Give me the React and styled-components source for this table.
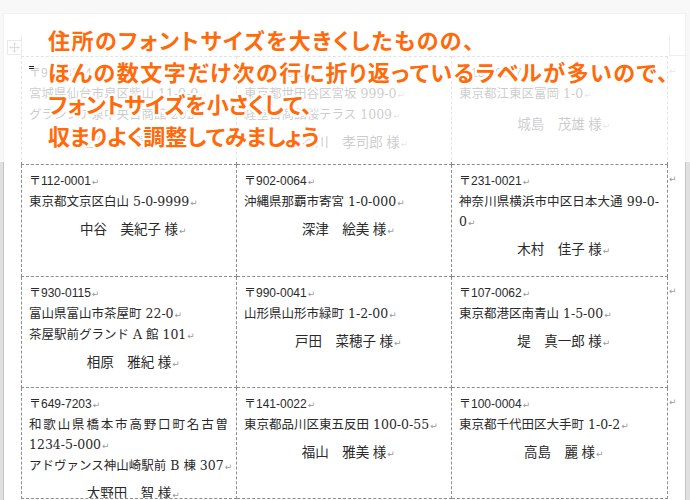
import React from 'react';
import styled, { createGlobalStyle } from 'styled-components';
import { Move } from 'lucide-react';

const GlobalStyle = createGlobalStyle`
  body {
    margin: 0;
    background: #e0e0e0;
    font-family: "Liberation Serif", "Noto Sans CJK JP", serif;
  }
`;

const Screen = styled.div`
  position: relative;
  width: 690px;
  height: 500px;
  overflow: hidden;
`;

const Page = styled.div`
  position: relative;
  box-sizing: border-box;
  width: 683px;
  height: 500px;
  margin: 13px 0 0 3px;
  padding: 42px 0 0 17px;
  background: #fff;
  border: 1px solid #c4c4c4;
  border-bottom: none;
`;

const CornerLeft = styled.div`
  position: absolute;
  left: 17px;
  top: 21px;
  width: 1px;
  height: 21px;
  background: #b8b8b8;
`;

const CornerRight = styled.div`
  position: absolute;
  left: 665px;
  top: 21px;
  width: 17px;
  height: 20px;
  border-left: 1px solid #b8b8b8;
  border-bottom: 1px solid #b8b8b8;
`;

const MoveHandle = styled.div`
  position: absolute;
  left: 3px;
  top: 26px;
  width: 13px;
  height: 13px;
  border: 1px solid #a8a8a8;
  background: #fff;
  display: flex;
  align-items: center;
  justify-content: center;
  color: #444;
`;

const Table = styled.div`
  display: flex;
  flex-direction: column;
`;

const Row = styled.div`
  display: grid;
  grid-template-columns: 216px 215px 216px 20px;
  height: ${p => p.$h}px;
`;

const Cell = styled.div`
  box-sizing: border-box;
  padding: 6px 0 0 7px;
  border-right: 1px dashed #8c8c8c;
  border-bottom: 1px dashed #8c8c8c;
  border-left: ${p => (p.$first ? '1px dashed #8c8c8c' : 'none')};
  border-top: ${p => (p.$top ? '1px dashed #8c8c8c' : 'none')};
  color: #2a2a2a;
  overflow: hidden;
`;

const RowEnd = styled.div`
  padding: ${p => (p.$top ? 9 : 8)}px 0 0 1px;
  font-family: "DejaVu Sans", sans-serif;
  font-size: 9px;
  color: #9a9a9a;
  line-height: 12px;
`;

const Postal = styled.div`
  font-family: "Liberation Sans", "Noto Sans CJK JP", sans-serif;
  font-size: 12px;
  line-height: 20px;
`;

const Address = styled.div`
  font-family: "DejaVu Serif", "Noto Sans CJK JP", serif;
  font-size: 12.5px;
  line-height: 20px;
  white-space: nowrap;
  padding-right: 8px;
  text-align: ${p => (p.$spread ? 'justify' : 'left')};
  text-align-last: ${p => (p.$spread ? 'justify' : 'auto')};
`;

const Name = styled.div`
  margin-top: 6px;
  font-size: 13.5px;
  line-height: 21px;
  text-align: center;
  white-space: nowrap;
  padding-right: 7px;
`;

const Mark = styled.span`
  display: inline-block;
  width: 11px;
  margin-right: -11px;
  font-family: "DejaVu Sans", sans-serif;
  font-size: 9px;
  color: #9a9a9a;
  text-align: left;
  text-indent: 1px;
`;

const Overlay = styled.div`
  position: absolute;
  left: 0;
  top: 0;
  right: 0;
  height: 162px;
  background: rgba(255, 255, 255, 0.76);
  box-sizing: border-box;
  padding: 23px 0 0 48px;
`;

const Caret = styled.div`
  position: absolute;
  left: 29px;
  top: 66px;
  width: 5px;
  height: 3px;
  border-top: 1px solid #222;
  border-bottom: 1px solid #222;
  box-sizing: border-box;
`;

const Callout = styled.div`
  font-family: "Noto Sans CJK JP", sans-serif;
  font-weight: 700;
  font-size: 22px;
  line-height: 32px;
  color: #ff6a0a;
  white-space: nowrap;
  letter-spacing: ${p => p.$ls || 0}px;
  font-feature-settings: "palt";
  text-shadow:
    2px 0 0 #fff, -2px 0 0 #fff, 0 2px 0 #fff, 0 -2px 0 #fff,
    2px 2px 0 #fff, -2px -2px 0 #fff, 2px -2px 0 #fff, -2px 2px 0 #fff,
    0 0 3px #fff;
`;

const rows = [
  {
    h: 108,
    cells: [
      { postal: '〒981-3204', lines: ['宮城県仙台市泉区紫山 11-0-0', 'グランシア泉中央日商館 202'], name: '佐々木　健一 様' },
      { postal: '〒156-0051', lines: ['東京都世田谷区宮坂 999-0', '経堂日商館桜テラス 1009'], name: '長谷川　孝司郎 様' },
      { postal: '〒135-0047', lines: ['東京都江東区富岡 1-0'], name: '城島　茂雄 様', gap: 9 },
    ],
  },
  {
    h: 112,
    cells: [
      { postal: '〒112-0001', lines: ['東京都文京区白山 5-0-9999'], name: '中谷　美紀子 様' },
      { postal: '〒902-0064', lines: ['沖縄県那覇市寄宮 1-0-000'], name: '深津　絵美 様' },
      { postal: '〒231-0021', lines: [{ text: '神奈川県横浜市中区日本大通 99-0-', spread: true, nomark: true }, '0'], name: '木村　佳子 様' },
    ],
  },
  {
    h: 111,
    cells: [
      { postal: '〒930-0115', lines: ['富山県富山市茶屋町 22-0', '茶屋駅前グランド A 館 101'], name: '相原　雅紀 様' },
      { postal: '〒990-0041', lines: ['山形県山形市緑町 1-2-00'], name: '戸田　菜穂子 様' },
      { postal: '〒107-0062', lines: ['東京都港区南青山 1-5-00'], name: '堤　真一郎 様' },
    ],
  },
  {
    h: 111,
    cells: [
      { postal: '〒649-7203', lines: [{ text: '和歌山県橋本市高野口町名古曽', spread: true, nomark: true }, '1234-5-000', 'アドヴァンス神山崎駅前 B 棟 307'], name: '大野田　智 様' },
      { postal: '〒141-0022', lines: ['東京都品川区東五反田 100-0-55'], name: '福山　雅美 様' },
      { postal: '〒100-0004', lines: ['東京都千代田区大手町 1-0-2'], name: '高島　麗 様' },
    ],
  },
];

const Label = ({ data, first, top }) => (
  <Cell $first={first} $top={top}>
    <Postal>{data.postal}<Mark>↵</Mark></Postal>
    {data.lines.map((line, i) => {
      const item = typeof line === 'string' ? { text: line } : line;
      return (
        <Address key={i} $spread={item.spread}>
          {item.text}
          {!item.nomark && <Mark>↵</Mark>}
        </Address>
      );
    })}
    <Name style={data.gap ? { marginTop: data.gap } : undefined}>
      {data.name}<Mark>↵</Mark>
    </Name>
  </Cell>
);

const App = () => {
  return (
    <>
      <GlobalStyle />
      <Screen>
        <Page>
          <CornerLeft />
          <CornerRight />
          <MoveHandle><Move size={11} strokeWidth={1.6} /></MoveHandle>
          <Table>
            {rows.map((row, r) => (
              <Row key={r} $h={r === 0 ? row.h + 1 : row.h}>
                {row.cells.map((c, i) => (
                  <Label key={i} data={c} first={i === 0} top={r === 0} />
                ))}
                <RowEnd $top={r === 0}>↵</RowEnd>
              </Row>
            ))}
          </Table>
        </Page>
        <Overlay>
          <Caret />
          <Callout $ls={1.5}>住所のフォントサイズを大きくしたものの、</Callout>
          <Callout $ls={1.5}>ほんの数文字だけ次の行に折り返っているラベルが多いので、</Callout>
          <Callout>フォントサイズを小さくして、</Callout>
          <Callout>収まりよく調整してみましょう</Callout>
        </Overlay>
      </Screen>
    </>
  );
};

export default App;
